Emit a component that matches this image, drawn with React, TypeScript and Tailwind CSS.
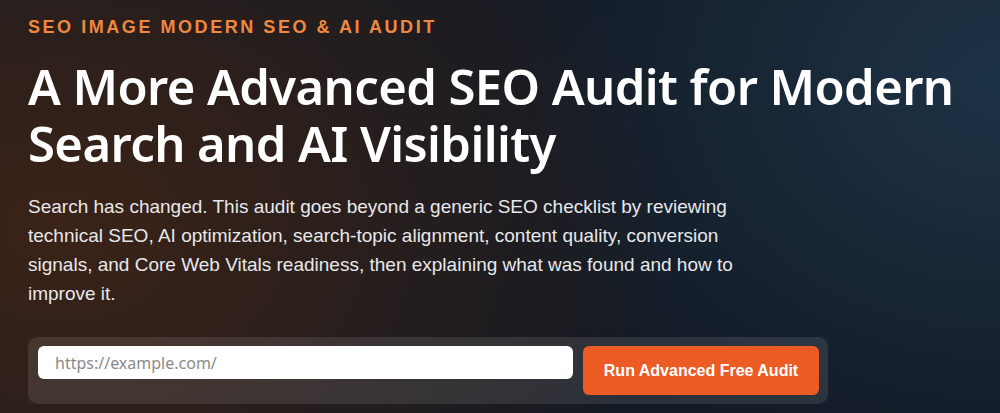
export default function App() {
  return (
    <div className="h-[413px] w-full overflow-hidden bg-[#131a24] bg-[radial-gradient(ellipse_620px_460px_at_60px_230px,#3b2317_0%,rgba(58,34,22,0.65)_40%,rgba(19,26,36,0)_100%),radial-gradient(ellipse_520px_420px_at_1000px_80px,#1d3347_0%,rgba(29,51,71,0.5)_45%,rgba(19,26,36,0)_100%)] px-7 pt-[15px]">
      <p className="font-['Liberation_Sans',Arial,sans-serif] text-[18px] font-bold leading-6 tracking-[2.55px] text-[#f0883f]">
        SEO IMAGE MODERN SEO &amp; AI AUDIT
      </p>
      <h1 className="mt-[19px] font-['Noto_Sans',sans-serif] text-[49px] font-semibold leading-[57px] tracking-[-0.6px] text-white">
        A More Advanced SEO Audit for Modern
        <br />
        Search and AI Visibility
      </h1>
      <p className="mt-[20px] max-w-[745px] font-['Liberation_Sans',Arial,sans-serif] text-[19px] leading-[29px] text-[#e6e8eb]">
        Search has changed. This audit goes beyond a generic SEO checklist by reviewing technical SEO, AI optimization,
        search-topic alignment, content quality, conversion signals, and Core Web Vitals readiness, then explaining what
        was found and how to improve it.
      </p>
      <div className="mt-[29px] flex w-[800px] items-start gap-[10px] rounded-[10px] bg-[rgba(255,255,255,0.1)] py-[9px] pl-[10px] pr-[9px]">
        <input
          type="text"
          placeholder="https://example.com/"
          className="h-[33px] flex-1 rounded-[6px] bg-white px-[17px] font-['Noto_Sans',sans-serif] text-[16px] text-gray-800 outline-none placeholder:text-[#8a8a8a]"
        />
        <button className="h-[49px] w-[236px] rounded-[6px] bg-[#ec5b24] font-['Liberation_Sans',Arial,sans-serif] text-[16px] font-bold text-white">
          Run Advanced Free Audit
        </button>
      </div>
    </div>
  );
}
